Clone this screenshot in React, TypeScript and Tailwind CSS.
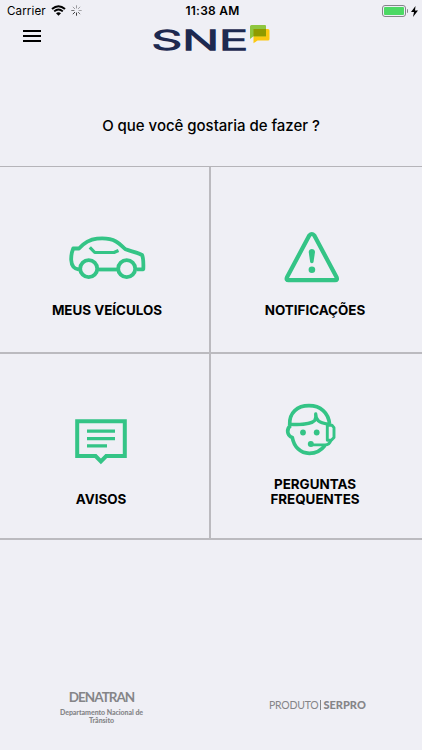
import React from 'react'
import { clsx } from 'clsx'

interface MenuTileProps {
  label: React.ReactNode
  icon: React.ReactNode
  className?: string
  labelClassName?: string
}

const CarIcon = () => (
  <svg
    className="w-20 h-12"
    viewBox="67 233 80 48"
    fill="none"
    stroke="#34c486"
    strokeWidth="3.800"
    strokeLinejoin="round"
  >
    <path d="M79 269.500 C73.500 269 71.500 265.500 71.200 260 C71 255 71.800 252 73.200 248.500 H79 C84 243 90 239.500 97 238.700 C104 238 112 239.300 116 241.500 C120 243.700 122.500 247 125.500 249.300 C131 251.300 138 252.700 142 255 C143.600 258 143.500 264 143.300 269.300 H136.500" />
    <path d="M98 269.500 H117" />
    <path d="M89.800 247.300 L94.800 252.500 H114 L118.500 250.500" strokeWidth="3.200" />
    <circle cx="88.700" cy="268.700" r="8.500" />
    <circle cx="126.700" cy="268.700" r="8.500" />
  </svg>
)

const WarningIcon = () => (
  <svg className="w-14 h-[52px]" viewBox="284 231 56 52" fill="none">
    <path
      d="M309.400 235.300 L287 277.200 Q285.800 280.200 288.600 280.200 H335 Q337.800 280.200 336.600 277.200 L314.200 235.300 Q311.800 232.700 309.400 235.300 Z"
      stroke="#34c486"
      strokeWidth="4.200"
      strokeLinejoin="round"
    />
    <path
      d="M308.700 252 C308.700 247.900 315 247.900 315 252 L313.500 262.300 Q311.900 264 310.200 262.300 Z"
      fill="#34c486"
    />
    <circle cx="311.900" cy="269.700" r="3.300" fill="#34c486" />
  </svg>
)

const NoticeIcon = () => (
  <svg
    className="w-[52px] h-[46px]"
    viewBox="75 419 52 46"
    fill="none"
    stroke="#34c486"
  >
    <path
      d="M77.200 421.200 H124.800 V456 H106.200 L100.900 461.300 L95.600 456 H77.200 Z"
      strokeWidth="4"
    />
    <path d="M87 431.200 H115 M87 438.600 H115 M87 445.900 H107" strokeWidth="3.200" />
  </svg>
)

const SupportIcon = () => (
  <svg
    className="w-[52px] h-[54px]"
    viewBox="285 402 52 54"
    fill="none"
    stroke="#34c486"
    strokeWidth="3.700"
    strokeLinejoin="round"
  >
    <path d="M289.700 425 C289 412.500 297.500 405.700 309 405.700 C320.500 405.700 328.500 412.500 329.500 424" />
    <path
      d="M290 424.300 C299 424.800 311.500 424 314.800 420.300 Q316.200 418.400 315.700 414 C315.800 420 318.500 422.800 328 424.200"
      strokeWidth="3.300"
    />
    <path d="M290.700 425.500 C286.500 428.500 286.500 435.500 292.300 437.500 C294 447 300.500 453.300 309.300 453.300 C316.500 453.300 321.500 450 325 445.300" />
    <path
      d="M327.300 425.300 H332 L334 427.600 V437.500 L331.300 440.300 H327.300 Z"
      strokeWidth="2.900"
    />
    <path d="M331 440 Q329.500 444.900 325 444.900 H311" strokeWidth="2.900" />
    <circle cx="310.800" cy="444" r="3" fill="#34c486" stroke="none" />
    <circle cx="303" cy="432.500" r="2.900" fill="#34c486" stroke="none" />
    <circle cx="316.700" cy="432.500" r="2.900" fill="#34c486" stroke="none" />
  </svg>
)

const MenuTile: React.FC<MenuTileProps> = ({
  label,
  icon,
  className = '',
  labelClassName = ''
}) => (
  <button
    className={clsx(
      'flex flex-col items-center border-b-2 border-[#bbbabf]',
      className
    )}
  >
    {icon}
    <span
      className={clsx(
        'text-[13.4px] font-bold text-center whitespace-nowrap',
        labelClassName
      )}
    >
      {label}
    </span>
  </button>
)

const StatusBar = () => (
  <div className="h-[22px] px-[7px] pr-1 grid grid-cols-3 items-center text-xs">
    <div className="flex items-center">
      <span className="pt-px text-[11.6px] tracking-[0.1px]">Carrier</span>
      <svg className="ml-[5px] w-[15px] h-[11px]" viewBox="0 0 15 11" fill="none">
        <path d="M1 4.100 Q7.500 -1.700 14 4.100" stroke="black" strokeWidth="2" />
        <path d="M3.200 6.400 Q7.500 2.600 11.800 6.400" stroke="black" strokeWidth="1.900" />
        <path d="M5 8.200 Q7.500 6.100 10 8.200 L7.500 10.800 Z" fill="black" />
      </svg>
      <svg
        className="ml-[5px] w-[11px] h-[11px]"
        viewBox="0 0 11 11"
        stroke="#333"
        strokeWidth="1"
        strokeLinecap="round"
      >
        <path d="M5.500 .7 V3 M2.100 2.100 L3.700 3.700" opacity=".45" />
        <path d="M8.900 2.100 L7.300 3.700 M8 5.500 H10.300" opacity=".4" />
        <path d="M7.300 7.300 L8.900 8.900 M.7 5.500 H3" opacity=".65" />
        <path d="M5.500 8 V10.300 M3.700 7.300 L2.100 8.900" opacity=".95" />
      </svg>
    </div>
    <span className="text-center font-semibold text-[12px] tracking-[0.25px] whitespace-nowrap">
      11:38 AM
    </span>
    <div className="flex items-center justify-end">
      <div className="w-6 h-3 p-px rounded-[3px] border border-[#85858a]">
        <div className="w-5 h-2 rounded-[1px] bg-[#4cd964]" />
      </div>
      <div className="ml-px w-px h-1 rounded-r-full bg-[#85858a]" />
      <svg className="ml-[3px] w-[7px] h-[11px]" viewBox="0 0 7 11">
        <path d="M4.500 0 L0 6 H3 L2 11 L7 4.500 H4 Z" />
      </svg>
    </div>
  </div>
)

const Logo = () => (
  <svg className="w-[124px] h-[42px]" viewBox="150 18 124 42">
    <text
      x="151.500"
      y="50"
      fontSize="26.500"
      fontFamily="Inter, sans-serif"
      fontWeight="300"
      fill="#1d2950"
      stroke="#1d2950"
      strokeWidth="1.300"
      textLength="96.500"
      lengthAdjust="spacingAndGlyphs"
    >
      SNE
    </text>
    <path
      d="M254.500 29 H268 Q269.500 29 269.500 30.500 V39 Q269.500 40.500 268 40.500 H257.500 L253.500 43.300 V30 Q253.500 29 254.500 29 Z"
      fill="#fbc811"
    />
    <path
      d="M251.500 25 H265 Q266 25 266 26 V36.300 H253.500 L250 39 V26.500 Q250 25 251.500 25 Z"
      fill="#8fc63f"
    />
    <path d="M253.500 29 H266 V36.300 H253.500 Z" fill="#8f9b00" />
  </svg>
)

const App: React.FC = () => {
  return (
    <div className="w-full h-[750px] flex flex-col overflow-hidden bg-[#efeff5] text-black font-['Inter',sans-serif]">
      <StatusBar />

      <header className="h-[58px] flex items-start pl-[23px]">
        <button aria-label="Menu" className="mt-2 w-[18px] flex flex-col gap-[3px]">
          <span className="h-0.5 bg-black" />
          <span className="h-0.5 bg-black" />
          <span className="h-0.5 bg-black" />
        </button>
        <div className="ml-[109px] -mt-1">
          <Logo />
        </div>
      </header>

      <h1 className="h-[86px] pt-[34px] text-center text-[15px] leading-6 font-[450] tracking-[-0.03px] whitespace-nowrap">
        O que você gostaria de fazer ?
      </h1>

      <main className="grid grid-cols-[211px_211px] grid-rows-[187px_186px] border-t border-[#b5b4b9]">
        <MenuTile
          icon={<CarIcon />}
          label="MEUS VEÍCULOS"
          className="border-r-2 pt-[66px] pl-[5px]"
          labelClassName="mt-[21px] leading-4"
        />
        <MenuTile
          icon={<WarningIcon />}
          label="NOTIFICAÇÕES"
          className="pt-16 pr-[9px]"
          labelClassName="mt-[19px] ml-1.5 leading-4"
        />
        <MenuTile
          icon={<NoticeIcon />}
          label="AVISOS"
          className="border-r-2 pt-[65px] pr-[7px]"
          labelClassName="mt-[26px] leading-4"
        />
        <MenuTile
          icon={<SupportIcon />}
          label={
            <>
              PERGUNTAS
              <br />
              FREQUENTES
            </>
          }
          className="pt-12 pr-[11px]"
          labelClassName="mt-[20.5px] ml-2 leading-[15.5px]"
        />
      </main>

      <footer className="flex pt-[147px] text-[#858588]">
        <div className="ml-[51px] w-[101px] text-center font-['Lato',sans-serif]">
          <p className="text-[13.5px] leading-[21px] font-bold tracking-[-1px]">DENATRAN</p>
          <p className="text-[7px] leading-[8px] font-black tracking-[-0.05px]">
            Departamento Nacional de
            <br />
            Trânsito
          </p>
        </div>
        <div className="ml-[117px] mt-2.5 flex items-center h-4 font-['Lato',sans-serif] text-[11px] whitespace-nowrap">
          <span className="pt-px text-[10.5px] tracking-[-0.25px]">PRODUTO</span>
          <span className="mx-0.5 w-px h-2.5 bg-[#858588]" />
          <span className="font-black">SERPRO</span>
        </div>
      </footer>
    </div>
  )
}

export default App
